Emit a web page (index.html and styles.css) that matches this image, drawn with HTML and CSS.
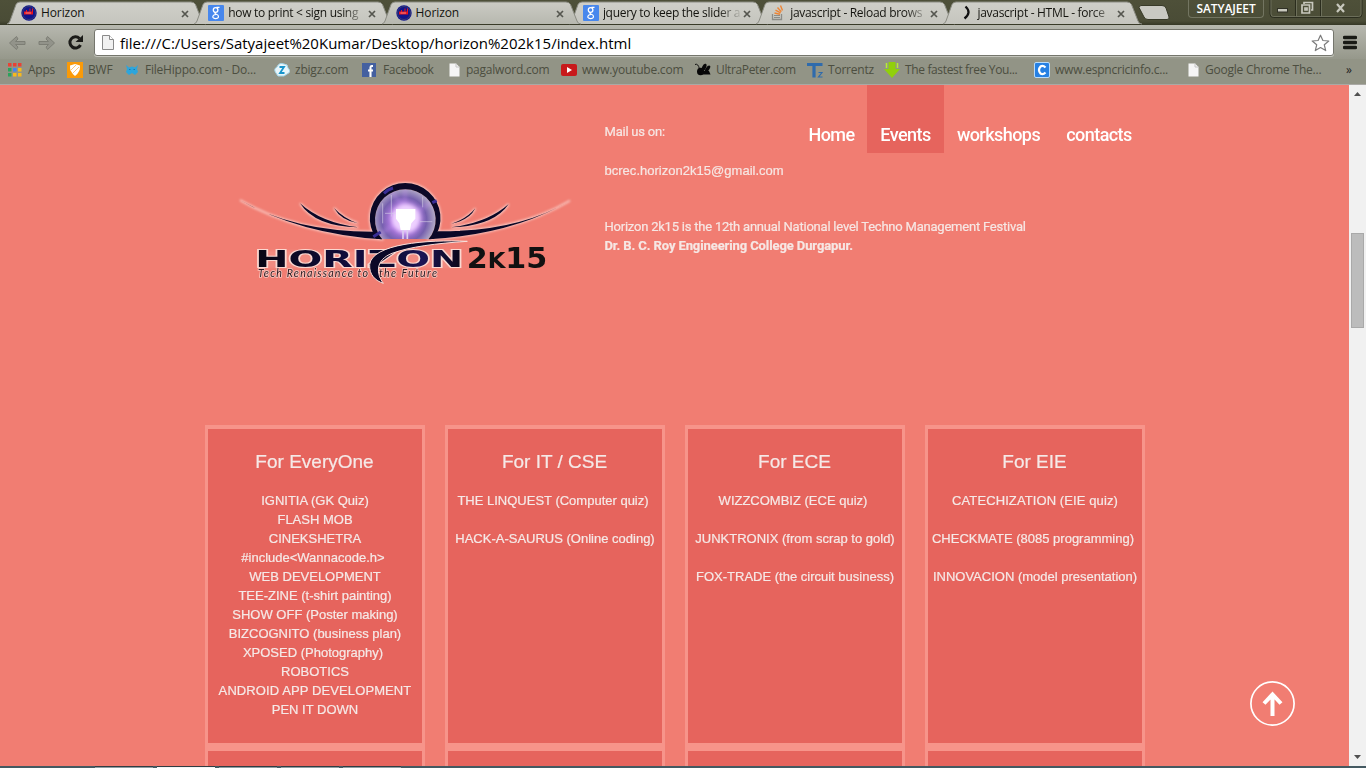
FILE: index.html
```html
<!DOCTYPE html>
<html lang="en">
<head>
<meta charset="utf-8">
<title>Horizon</title>
<link rel="stylesheet" href="styles.css">
</head>
<body>
<svg width="0" height="0" class="defs">
  <defs>
    <linearGradient id="tabfill" x1="0" y1="0" x2="0" y2="1"><stop offset="0" stop-color="#cfcfc9"/><stop offset="1" stop-color="#c5c5be"/></linearGradient>
    <linearGradient id="activefill" x1="0" y1="0" x2="0" y2="1"><stop offset="0" stop-color="#cbcbc4"/><stop offset="1" stop-color="#b7b8af"/></linearGradient>
    <symbol id="tab" viewBox="0 0 199 24"><path d="M0 23.5Q2 23 3 20.500L9 4Q10 1.500 13 1.500H184Q187 1.500 188.500 4L195 20.500Q196 23.500 199 23.500" stroke="#8b8c83" stroke-width="1"/></symbol>
    <symbol id="x" viewBox="0 0 8 8"><path d="M1 1L7 7M7 1L1 7" stroke="#55564f" stroke-width="1.700"/></symbol>
    <symbol id="horizon" viewBox="0 0 16 16"><circle cx="8" cy="8" r="7.700" fill="#10158c"/><circle cx="8" cy="8" r="6.500" fill="none" stroke="#363b75"/><path d="M3 6.500H5V5H6V6.500H8.500V3.500H9.500V6.500H11V3.500H12V9.500H3Z" fill="#e8161d"/><path d="M4.500 8H10" stroke="#f6a3a3" stroke-width=".8"/></symbol>
    <symbol id="google" viewBox="0 0 16 16"><rect width="16" height="16" rx="1" fill="#4787ed"/><ellipse cx="7.600" cy="5" rx="2.300" ry="2.400" fill="none" stroke="#fff" stroke-width="1.300"/><path d="M8.500 2.400H11.500M7.500 7.500Q6.300 8.800 8.500 9.300Q10.600 10 10.500 11.700C10.200 14.200 4.700 14.200 4.800 11.700Q5 9.700 8 9.500" fill="none" stroke="#fff" stroke-width="1.200"/></symbol>
    <symbol id="doc" viewBox="0 0 12 14"><path d="M1 .5H7.500L11 4V13.500H1Z" fill="#f5f5f5"/><path d="M7.500 .5V4H11" fill="none" stroke="#c4c4c4"/></symbol>
  </defs>
</svg>
<div class="screen">
  <header class="tabstrip">
    <div class="tabs">
      <div class="tab"><svg class="shape"><use href="#tab" fill="url(#tabfill)"/></svg><svg class="fav"><use href="#horizon"/></svg><span class="tt short">Horizon</span><svg class="x"><use href="#x"/></svg></div>
      <div class="tab"><svg class="shape"><use href="#tab" fill="url(#tabfill)"/></svg><svg class="fav"><use href="#google"/></svg><span class="tt fade">how to print &lt; sign using</span><svg class="x"><use href="#x"/></svg></div>
      <div class="tab active"><svg class="shape"><use href="#tab" fill="url(#activefill)"/></svg><svg class="fav"><use href="#horizon"/></svg><span class="tt short">Horizon</span><svg class="x"><use href="#x"/></svg></div>
      <div class="tab"><svg class="shape"><use href="#tab" fill="url(#tabfill)"/></svg><svg class="fav"><use href="#google"/></svg><span class="tt fade">jquery to keep the slider a</span><svg class="x"><use href="#x"/></svg></div>
      <div class="tab"><svg class="shape"><use href="#tab" fill="url(#tabfill)"/></svg><svg class="fav" viewBox="0 0 16 16"><path d="M2.500 9V14.500H11.500V9" fill="none" stroke="#8c8c87" stroke-width="1.300"/><path d="M4 12.500H10M4 10.500H10" stroke="#8c8c87" stroke-width="1.200"/><path d="M4.500 8L10 9.300M5.500 5.200L10.600 7.800M7.500 2.500L11.300 6.700M10.500 .5L12.500 5.500" stroke="#ee8535" stroke-width="1.400"/></svg><span class="tt fade">javascript - Reload brows</span><svg class="x"><use href="#x"/></svg></div>
      <div class="tab"><svg class="shape"><use href="#tab" fill="url(#tabfill)"/></svg><svg class="fav" viewBox="0 0 16 16"><path d="M8.500 1.500Q15 7.500 7.500 13.500" fill="none" stroke="#111" stroke-width="2.300"/></svg><span class="tt fade">javascript - HTML - force</span><svg class="x"><use href="#x"/></svg></div>
    </div>
    <svg class="newtab" viewBox="0 0 32 16"><path d="M2.500 .5H24Q27 .5 28 3L31 12Q31.500 14.500 29 14.500H10Q7 14.500 6 12L1 2.500Z" fill="#c9c9c2" stroke="#383a28"/></svg>
    <div class="user">SATYAJEET</div>
    <svg class="winctl" viewBox="0 0 94 19"><path d="M1 0V14Q1 17.500 4.500 17.500H89.500Q93 17.500 93 14V0M26.500 0V17M51.500 0V17" fill="none" stroke="#2b2d1e"/><path d="M2 0V14Q2 16.500 4.500 16.500H89.500Q92 16.500 92 14V0M27.500 0V16M52.500 0V16" fill="none" stroke="#757763" stroke-width=".8"/><rect x="8.500" y="8.500" width="10" height="3.500" fill="#c8c8bd" stroke="#303126"/><path d="M35 4V2.500H43.500V10H42M33 5H40.500V13H33ZM36 8H38V10H36Z" fill="none" stroke="#c8c8bd" stroke-width="1.700"/><path d="M68 4L75 12M75 4L68 12" stroke="#c8c8bd" stroke-width="2.200"/></svg>
  </header>
  <div class="toolbar">
    <svg class="nav" viewBox="0 0 94 34"><g fill="#92938a" stroke="#7d7e75"><path d="M9.500 18L16.500 11.500L18 14L15.500 16.500H25V19.500H15.500L18 22L16.500 24.500Z"/><path d="M54.500 18L47.500 11.500L46 14L48.500 16.500H39V19.500H48.500L46 22L47.500 24.500Z"/></g><path d="M79.500 13.500A5.600 5.600 0 1 0 80.500 20" fill="none" stroke="#1b1b18" stroke-width="3"/><path d="M83 10V17H75.500Z" fill="#1b1b18"/></svg>
    <div class="omnibox">
      <svg class="page" viewBox="0 0 12 15"><path d="M.5 .5H7.500L11.500 4.500V14.500H.5Z" fill="#f1f1f1" stroke="#8a8a8a"/><path d="M7.500 .5V4.500H11.500" fill="#fff" stroke="#8a8a8a"/></svg>
      <span class="url">file:///C:/Users/Satyajeet%20Kumar/Desktop/horizon%202k15/index.html</span>
      <svg class="star" viewBox="0 0 19 18"><path d="M9.500 1.200L11.900 6.500L17.800 7L13.300 10.800L14.700 16.600L9.500 13.500L4.300 16.600L5.700 10.800L1.200 7L7.100 6.500Z" fill="#fff" stroke="#7c7c7c" stroke-width="1.200" stroke-linejoin="round"/></svg>
    </div>
    <svg class="menu" viewBox="0 0 14 15"><path d="M1.500 2.500H12.500M1.500 7.500H12.500M1.500 12.500H12.500" stroke="#191a15" stroke-width="3.400" stroke-linecap="round"/></svg>
  </div>
  <nav class="bookmarks">
    <span><svg viewBox="0 0 16 16"><path d="M1 1h3.500v3.500H1zM6 1h3.500v3.500H6zM11 1h3.500v3.500H11z" fill="#e94235"/><path d="M1 6h3.500v3.500H1zM1 11h3.500v3.500H1z" fill="#2ba25c"/><path d="M6 6h3.500v3.500H6z" fill="#4285f4"/><path d="M6 11h3.500v3.500H6zM11 6h3.500v3.500H11zM11 11h3.500v3.500H11z" fill="#f7b91c"/></svg>Apps</span>
    <span><svg viewBox="0 0 16 16"><rect width="16" height="16" fill="#fa9a08"/><path d="M3 3.500L8 2L13 3.500Q13.500 10 8 14Q2.500 10 3 3.500Z" fill="#fff"/><path d="M3 9L9 3M5 12L12 5" stroke="#fbc77a"/></svg>BWF</span>
    <span><svg viewBox="0 0 16 16"><path d="M2 3L5 5.500L8 4.500L11 5.500L14 3L13 7L14 10L11 13L8 11L5 13L2 10L3 7Z" fill="#2da5dc"/><path d="M5 7.500H6.500M9.500 7.500H11" stroke="#1779b0"/></svg>FileHippo.com - Do...</span>
    <span><svg viewBox="0 0 16 16"><path d="M2 11Q-1 7 3 5Q5 0 10 2Q14 2 14 6Q18 10 13 12L10 14H4Z" fill="#e8f6fb" stroke="#a3d5e8"/><path d="M5.500 5H10L6 11H10.500" fill="none" stroke="#1895cc" stroke-width="1.800"/></svg>zbigz.com</span>
    <span class="tight"><svg viewBox="0 0 16 16"><rect x="0" y="1" width="14" height="14" fill="#4460a0"/><path d="M11 4H9.500Q8.500 4 8.500 5.500V15M6 8.500H11" fill="none" stroke="#fff" stroke-width="2.100"/></svg>Facebook</span>
    <span><svg class="small"><use href="#doc"/></svg>pagalword.com</span>
    <span><svg viewBox="0 0 16 16"><rect y="2" width="16" height="12" rx="2" fill="#c8191c"/><path d="M6 5L11 8L6 11Z" fill="#fff"/></svg>www.youtube.com</span>
    <span class="tight"><svg viewBox="0 0 16 16"><path d="M0 2.500Q3 1 4.500 7" fill="none" stroke="#111"/><ellipse cx="5.500" cy="9.500" rx="3.500" ry="3.800" fill="#080808"/><ellipse cx="9" cy="5.500" rx="2" ry="4" fill="#080808" transform="rotate(25 9 5.500)"/><ellipse cx="12.500" cy="7" rx="1.800" ry="4" fill="#080808" transform="rotate(35 12.500 7)"/><path d="M6 9L14 9L15.500 12.500H5Z" fill="#080808"/></svg>UltraPeter.com</span>
    <span><svg viewBox="0 0 16 16"><path d="M0 2.500H15.500M7 2V15.500" stroke="#2f6bac" stroke-width="3.200" fill="none"/><path d="M11.500 10.500H15L11.500 15H15.500" fill="none" stroke="#2f6bac" stroke-width="1.200"/></svg>Torrentz</span>
    <span class="tight"><svg viewBox="0 0 16 16"><path d="M4.500 0H11.500V7H16L8 16L0 7H4.500Z" fill="#91d00b"/><path d="M2.500 1V6M13.500 1V6" stroke="#b7ed33" stroke-width="1.500"/></svg>The fastest free You...</span>
    <span><svg viewBox="0 0 16 16"><rect x=".5" y=".5" width="15" height="15" rx="1.500" fill="#2680e3" stroke="#b9dbfa"/><path d="M11.500 5.500Q9 3 6.500 4.500Q3.500 8 6.500 11.500Q9 13 11.500 10.500" fill="none" stroke="#fff" stroke-width="2.200"/></svg>www.espncricinfo.c...</span>
    <span><svg class="small"><use href="#doc"/></svg>Google Chrome The...</span>
    <span class="more">»</span>
  </nav>
  <div class="viewport">
    <main class="content">
      <section class="top">
        <svg class="logo" viewBox="0 0 1050 375">
          <defs>
            <radialGradient id="bulb" cx=".48" cy=".52" r=".52"><stop offset="0" stop-color="#f3dcff"/><stop offset=".35" stop-color="#b77ae8"/><stop offset=".7" stop-color="#7660ae"/><stop offset="1" stop-color="#b8b1c9"/></radialGradient>
            <linearGradient id="ink" x1="0" x2="1"><stop offset="0" stop-color="#090713"/><stop offset=".5" stop-color="#120d40"/><stop offset=".6" stop-color="#090725"/><stop offset=".8" stop-color="#1b1556"/><stop offset="1" stop-color="#0a0716"/></linearGradient>
            <filter id="halo" x="-5%" y="-10%" width="110%" height="120%"><feGaussianBlur stdDeviation="3"/></filter>
            <filter id="soft" x="-50%" y="-50%" width="200%" height="200%"><feGaussianBlur stdDeviation="7"/></filter>
            <clipPath id="orb"><path d="M457 208A91 91 0 1 1 595 208Z"/></clipPath>
            <g id="wings"><path d="M30 90Q190 185 430 185L455 208Q210 192 30 90ZM210 100Q275 159 385 172Q255 170 210 100ZM312 114Q342 146 384 160Q333 151 312 114ZM1020 92Q865 185 624 184L598 208Q850 192 1020 92ZM836 102Q773 158 664 172Q792 168 836 102ZM736 115Q709 148 664 161Q718 151 736 115Z"/><path d="M439 206A106 106 0 1 1 612 206L595 208A91 91 0 1 0 457 208Z"/></g>
            <path id="swoosh" d="M712 214C590 208 425 222 419 284C417 314 436 332 460 340C438 310 436 270 486 250C540 230 620 220 712 214Z"/>
          </defs>
          <g fill="#fff3ef" stroke="#fff3ef" stroke-width="5" filter="url(#halo)" opacity=".7"><use href="#wings"/><rect x="86" y="244" width="602" height="48" opacity=".18"/></g>
          <circle cx="526" cy="145" r="93" fill="url(#bulb)" clip-path="url(#orb)"/>
          <g clip-path="url(#orb)"><path d="M445 195L625 85M475 55L555 150M525 40V210" stroke="#d39aff" stroke-width="7" opacity=".5" filter="url(#soft)"/><circle cx="528" cy="145" r="44" fill="#eed0ff" filter="url(#soft)"/><path d="M484 75V140M458 100V160M465 130H496M570 155H607M578 80V112" stroke="#d8d0e8" stroke-width="3" opacity=".6"/><path d="M498 117H556V146L544 160L540 180H512L508 160L498 146Z" fill="#fff"/><path d="M519 180V207M532 180V207" stroke="#dbcdf0" stroke-width="5"/></g>
          <use href="#wings" fill="#0b0827"/>
          <path d="M462 70Q475 58 489 54M607 98L620 92M430 200L452 186" stroke="#3a2e96" stroke-width="9" fill="none"/>
          <text class="word" x="76" y="291" textLength="624" lengthAdjust="spacingAndGlyphs">HORIZON</text>
          <use href="#swoosh" fill="#0b0827" stroke="#f8ded9" stroke-width="3"/>
          <text class="year" x="710" y="293" textLength="242" lengthAdjust="spacingAndGlyphs">2<tspan class="k">K</tspan>15</text>
          <text class="tag" x="84" y="322" textLength="330">Tech Renaissance to</text>
          <text class="tag" x="447" y="322" textLength="174">the Future</text>
        </svg>
        <div class="info">
          <p class="mail">Mail us on:</p>
          <p class="address">bcrec.horizon2k15@gmail.com</p>
          <p class="about">Horizon 2k15 is the 12th annual National level Techno Management Festival</p>
          <p class="college">Dr. B. C. Roy Engineering College Durgapur.</p>
        </div>
        <nav class="sitenav"><a>Home</a><a class="on">Events</a><a>workshops</a><a>contacts</a></nav>
      </section>
      <section class="cards">
        <article><h2>For EveryOne</h2><ul><li>IGNITIA (GK Quiz)</li><li>FLASH MOB</li><li>CINEKSHETRA</li><li class="nudge">#include&lt;Wannacode.h&gt;</li><li>WEB DEVELOPMENT</li><li>TEE-ZINE (t-shirt painting)</li><li>SHOW OFF (Poster making)</li><li>BIZCOGNITO (business plan)</li><li class="nudge">XPOSED (Photography)</li><li>ROBOTICS</li><li class="spaced">ANDROID APP DEVELOPMENT</li><li>PEN IT DOWN</li></ul></article>
        <article><h2>For IT / CSE</h2><ul class="wide"><li class="nudge">THE LINQUEST (Computer quiz)</li><li>HACK-A-SAURUS (Online coding)</li></ul></article>
        <article><h2>For ECE</h2><ul class="wide"><li class="nudge">WIZZCOMBIZ (ECE quiz)</li><li>JUNKTRONIX (from scrap to gold)</li><li>FOX-TRADE (the circuit business)</li></ul></article>
        <article><h2>For EIE</h2><ul class="wide"><li class="spaced">CATECHIZATION (EIE quiz)</li><li class="nudge">CHECKMATE (8085 programming)</li><li>INNOVACION (model presentation)</li></ul></article>
        <article></article><article></article><article></article><article></article>
      </section>
    </main>
    <svg class="totop" viewBox="0 0 45 45"><circle cx="22.500" cy="22.500" r="21.600" fill="none" stroke="#fff" stroke-width="1.700"/><path d="M22.500 35V13.500M14 22.500L22.500 13.500L31 22.500" fill="none" stroke="#fff" stroke-width="4"/></svg>
    <div class="scrollbar"><svg viewBox="0 0 17 17"><path d="M5 11L8.500 7L12 11Z" fill="#505050"/></svg><div class="thumb"></div><svg class="down" viewBox="0 0 17 17"><path d="M5 6L8.500 10L12 6Z" fill="#505050"/></svg></div>
  </div>
  <footer class="taskbar"><i></i><i class="lit"></i><i></i><i></i><i></i></footer>
</div>
</body>
</html>
```
FILE: styles.css
```css
* { box-sizing: border-box; }
body { margin: 0; overflow: hidden; font-family: "Liberation Sans", Arial, sans-serif; }
p, h2, ul { margin: 0; padding: 0; font-weight: normal; }
svg { display: block; flex: none; }
.defs { position: absolute; }
.screen { width: 1366px; height: 768px; display: flex; flex-direction: column; overflow: hidden; }

/* Browser window */
.tabstrip { height: 25px; flex: none; display: flex; background: linear-gradient(#4e5039, #4a4c36 21px, #363826); font-family: "Open Sans", "Noto Sans", sans-serif; }
.tabs { display: flex; padding-left: 7px; width: 1138px; flex: none; }
.tab { position: relative; width: 187.300px; flex: none; height: 25px; display: flex; align-items: center; padding-left: 14px; font-size: 12px; letter-spacing: -0.3px; color: #14140f; }
.tab.active { z-index: 2; }
.shape { position: absolute; left: 0; top: 0; width: 199px; height: 25px; }
.fav { position: relative; width: 16px; height: 16px; margin-top: 1px; }
.tt { position: relative; margin-left: 4px; width: 138px; white-space: nowrap; overflow: hidden; }
.short { letter-spacing: -.1px; }
.fade { -webkit-mask-image: linear-gradient(90deg, #000 115px, transparent 140px); mask-image: linear-gradient(90deg, #000 115px, transparent 140px); }
.x { position: relative; width: 8px; height: 8px; margin-left: 2px; margin-top: 2px; }
.newtab { width: 32px; height: 16px; margin-top: 5px; }
.user { width: 76px; height: 18px; margin-left: 18px; border: 1px solid #737561; border-top: 0; border-radius: 0 0 4px 4px; color: #fff; font-size: 12px; font-weight: 600; line-height: 17px; text-align: center; letter-spacing: -.1px; }
.winctl { width: 94px; height: 19px; margin-left: 5px; }
.toolbar { height: 34px; flex: none; display: flex; background: linear-gradient(#b7b8af, #96988b); }
.nav { width: 94px; height: 34px; }
.omnibox { width: 1240px; height: 27px; margin-top: 4px; background: #fff; border: 1px solid #75766d; border-radius: 3px; box-shadow: 0 1px #c4c5bc; display: flex; align-items: center; padding-left: 7px; }
.page { width: 12px; height: 15px; }
.url { width: 1197px; padding-left: 6px; font: 15px/24px "Open Sans", "Noto Sans", sans-serif; color: #000; }
.star { width: 19px; height: 18px; }
.menu { width: 14px; height: 15px; margin: 10px 0 0 9px; }
.bookmarks { height: 26px; flex: none; display: grid; grid-template-columns: 60px 57px 150px 88px 86px 113px 134px 112px 77px 150px 153px 159px 1fr; padding: 0 0 4px 7px; align-items: center; background: #929486; border-bottom: 1px solid #aaa9a5; font: 12px/16px "Open Sans", "Noto Sans", sans-serif; letter-spacing: -.22px; color: #4c4e40; }
.bookmarks span { display: flex; align-items: center; gap: 5px; white-space: nowrap; }
.bookmarks .tight { letter-spacing: -.36px; }
.bookmarks svg { width: 16px; height: 16px; }
.bookmarks .small { width: 13px; height: 14px; }
.bookmarks .more { color: #222; }

/* Festival page */
.viewport { position: relative; height: 681px; flex: none; display: flex; background: #f17d72; }
.content { width: 1349px; height: 681px; overflow: hidden; }
.top { height: 340px; display: flex; }
.logo { width: 350px; height: 125px; margin: 85px 0 0 230px; }
.logo .word { font: bold 68px/1 "DejaVu Sans", sans-serif; fill: url(#ink); stroke: #fbd8d1; stroke-width: 6px; paint-order: stroke; }
.logo .year { font: bold 86px/1 "DejaVu Sans", sans-serif; fill: #111; }
.logo .k { font-size: 65px; }
.logo .tag { font: italic 32px/1 "Lato", sans-serif; fill: #2b1920; stroke: #f9c7bf; stroke-width: 5px; paint-order: stroke; }
.info { width: 217px; padding-left: 24.500px; padding-top: 37px; color: #f6e7e4; font: 500 13px/19px Roboto, "Noto Sans", sans-serif; letter-spacing: -.22px; white-space: nowrap; -webkit-text-stroke: .2px #f6e7e4; }
.address { margin: 20px 0 37px; font: 13px/19px "Liberation Sans", Arial, sans-serif; letter-spacing: .02px; }
.college { font-weight: 700; letter-spacing: -.1px; }
.sitenav { display: flex; height: 68px; margin-left: -1px; font: 500 18px/25px Roboto, "Noto Sans", sans-serif; letter-spacing: -.55px; color: #fff; }
.sitenav a { padding: 37px 0 0; width: 71px; text-align: center; }
.sitenav .on { background: #e6645d; width: 77px; }
.sitenav a:nth-child(3) { width: 109px; }
.sitenav a:nth-child(4) { width: 92px; }
.cards { display: grid; grid-template-columns: repeat(4, 220px); column-gap: 20px; grid-auto-rows: 322px; padding-left: 205px; }
.cards article { background: #e6645d; border: solid #f7948a; border-width: 4px 3px; text-align: center; color: #f5e9e7; padding-top: 20px; -webkit-text-stroke: .2px #f5e9e7; }
.cards h2 { font-size: 19px; line-height: 26px; padding-right: 1px; }
.cards ul { list-style: none; font-size: 13px; line-height: 19px; margin-top: 16px; white-space: nowrap; }
.cards .wide { display: grid; row-gap: 19px; }
.cards .nudge { padding-right: 4px; }
.cards .spaced { letter-spacing: .1px; }
.totop { position: absolute; left: 1250px; top: 596px; width: 45px; height: 45px; }
.scrollbar { width: 17px; background: #f1f1f1; display: flex; flex-direction: column; }
.scrollbar svg { width: 17px; height: 17px; }
.thumb { height: 95px; margin: 131px 2px 0; background: #bcbcbc; border: 1px solid #a9a9a9; }
.scrollbar .down { margin-top: auto; }
.taskbar { height: 2px; flex: none; background: #445961; display: flex; gap: 4px; padding-left: 95px; }
.taskbar i { width: 58px; border-top: 1px solid #303c42; background: #8e9da2; }
.taskbar .lit { background: #f4f4f4; }
```
